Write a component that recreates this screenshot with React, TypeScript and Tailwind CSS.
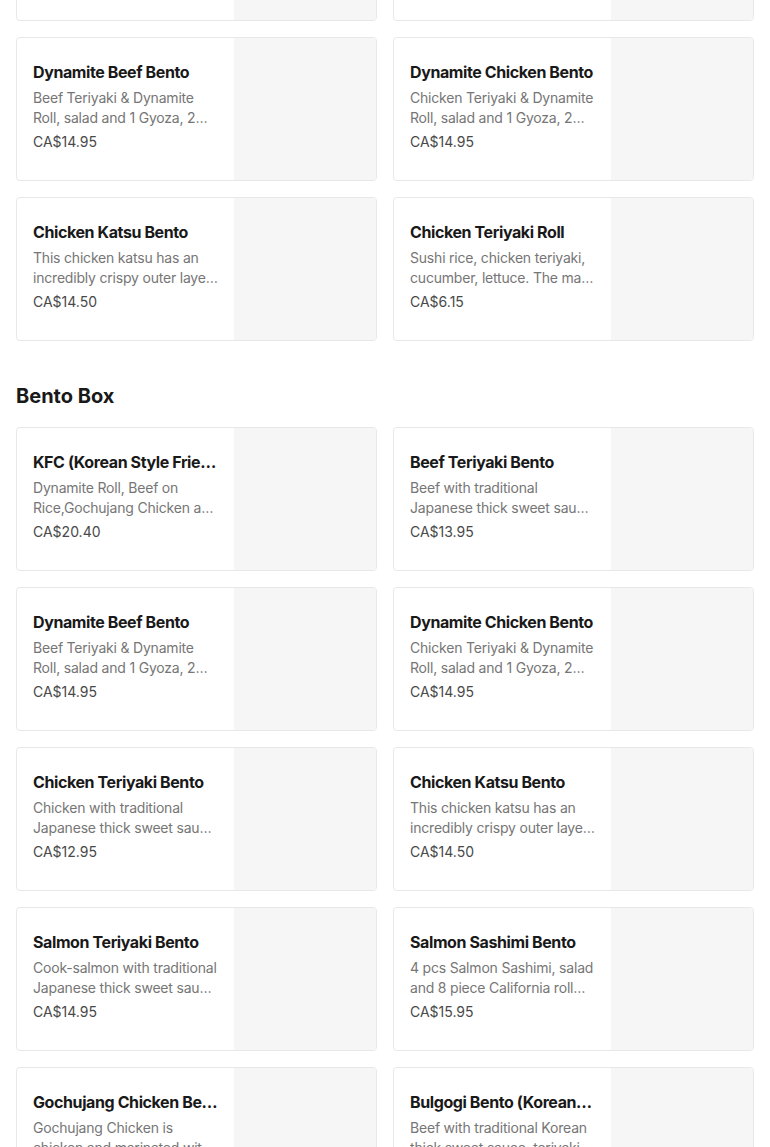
type Item = { name: string; desc: string; price: string };

const topRow: Item[] = [
  { name: "KFC (Korean Style Fried Chicken) Bento", desc: "Dynamite Roll, Beef on Rice,Gochujang Chicken and more", price: "CA$20.40" },
  { name: "Beef Teriyaki Bento", desc: "Beef with traditional Japanese thick sweet sauce and rice", price: "CA$13.95" },
];

const popular: Item[] = [
  { name: "Dynamite Beef Bento", desc: "Beef Teriyaki & Dynamite Roll, salad and 1 Gyoza, 2 pieces of tempura", price: "CA$14.95" },
  { name: "Dynamite Chicken Bento", desc: "Chicken Teriyaki & Dynamite Roll, salad and 1 Gyoza, 2 pieces of tempura", price: "CA$14.95" },
  { name: "Chicken Katsu Bento", desc: "This chicken katsu has an incredibly crispy outer layer and juicy inside", price: "CA$14.50" },
  { name: "Chicken Teriyaki Roll", desc: "Sushi rice, chicken teriyaki, cucumber, lettuce. The main roll", price: "CA$6.15" },
];

const bento: Item[] = [
  { name: "KFC (Korean Style Fried Chicken) Bento", desc: "Dynamite Roll, Beef on Rice,Gochujang Chicken and more", price: "CA$20.40" },
  { name: "Beef Teriyaki Bento", desc: "Beef with traditional Japanese thick sweet sauce and rice", price: "CA$13.95" },
  { name: "Dynamite Beef Bento", desc: "Beef Teriyaki & Dynamite Roll, salad and 1 Gyoza, 2 pieces of tempura", price: "CA$14.95" },
  { name: "Dynamite Chicken Bento", desc: "Chicken Teriyaki & Dynamite Roll, salad and 1 Gyoza, 2 pieces of tempura", price: "CA$14.95" },
  { name: "Chicken Teriyaki Bento", desc: "Chicken with traditional Japanese thick sweet sauce and rice", price: "CA$12.95" },
  { name: "Chicken Katsu Bento", desc: "This chicken katsu has an incredibly crispy outer layer and juicy inside", price: "CA$14.50" },
  { name: "Salmon Teriyaki Bento", desc: "Cook-salmon with traditional Japanese thick sweet sauce and rice", price: "CA$14.95" },
  { name: "Salmon Sashimi Bento", desc: "4 pcs Salmon Sashimi, salad and 8 piece California roll with rice", price: "CA$15.95" },
  { name: "Gochujang Chicken Bento", desc: "Gochujang Chicken is chicken and marinated with gochujang sauce", price: "CA$14.95" },
  { name: "Bulgogi Bento (Korean Style Beef)", desc: "Beef with traditional Korean thick sweet sauce, teriyaki and rice", price: "CA$14.95" },
];

const MenuCard = ({ item }: { item: Item }) => (
  <div className="flex h-[144px] overflow-hidden rounded-[4px] border border-[#e8e8e8] bg-white">
    <div className="flex min-w-0 flex-1 flex-col justify-center px-4 pb-[6px]">
      <div className="truncate text-[16px] font-bold leading-[24px] tracking-[-0.4px] text-[#191919]">
        {item.name}
      </div>
      <div className="mt-[4px] line-clamp-2 text-[14px] leading-[20px] tracking-[-0.2px] text-[#767676]">
        {item.desc}
      </div>
      <div className="mt-[4px] text-[14px] leading-[20px] text-[#494949]">{item.price}</div>
    </div>
    <div className="w-[142px] shrink-0 bg-[#f6f6f6]" />
  </div>
);

const Grid = ({ items }: { items: Item[] }) => (
  <div className="grid grid-cols-2 gap-4">
    {items.map((item, i) => (
      <MenuCard key={i} item={item} />
    ))}
  </div>
);

export default function App() {
  return (
    <div
      className="min-h-screen bg-white px-4"
      style={{ fontFamily: "Inter, 'Noto Sans', sans-serif" }}
    >
      <div className="-mt-[123px] flex flex-col gap-4">
        <Grid items={topRow} />
        <Grid items={popular} />
      </div>
      <h2 className="mt-[41px] mb-[17px] text-[20px] font-bold leading-[28px] text-[#191919]">
        Bento Box
      </h2>
      <Grid items={bento} />
    </div>
  );
}
